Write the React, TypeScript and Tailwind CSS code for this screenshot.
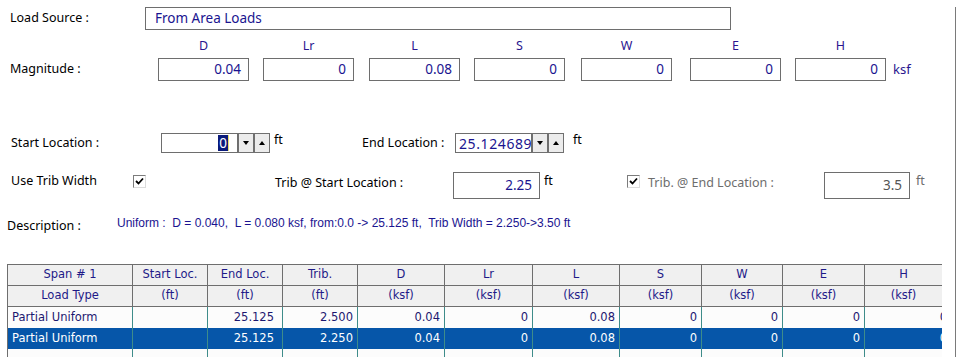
import React from 'react';

const magnitudes = [
   { key: 'D', value: '0.04', gap: 'ml-0' },
   { key: 'Lr', value: '0', gap: 'ml-[14px]' },
   { key: 'L', value: '0.08', gap: 'ml-[15px]' },
   { key: 'S', value: '0', gap: 'ml-[14px]' },
   { key: 'W', value: '0', gap: 'ml-[16px]' },
   { key: 'E', value: '0', gap: 'ml-[18px]' },
   { key: 'H', value: '0', gap: 'ml-[14px]' },
];

const headTop = ['Span # 1', 'Start Loc.', 'End Loc.', 'Trib.', 'D', 'Lr', 'L', 'S', 'W', 'E', 'H'];
const headBottom = ['Load Type', '(ft)', '(ft)', '(ft)', '(ksf)', '(ksf)', '(ksf)', '(ksf)', '(ksf)', '(ksf)', '(ksf)'];

const rows = [
   { cells: ['Partial Uniform', '', '25.125', '2.500', '0.04', '0', '0.08', '0', '0', '0', '0'], selected: false },
   { cells: ['Partial Uniform', '', '25.125', '2.250', '0.04', '0', '0.08', '0', '0', '0', '0'], selected: true },
   { cells: ['', '', '', '', '', '', '', '', '', '', ''], selected: false },
];

const CheckBox = () => (
   <div className="w-[13px] h-[13px] border-t border-l border-[#7c7c7c] border-r border-b border-r-[#dcdcdc] border-b-[#dcdcdc] bg-white flex items-center justify-center">
      <svg width="9" height="9" viewBox="0 0 9 9">
         <path d="M1 4 L3.5 6.5 L8 1.5" stroke="#000" strokeWidth="1.8" fill="none" />
      </svg>
   </div>
);

const SpinButton = ({ up }: { up?: boolean }) => (
   <div className="w-[16px] h-[20px] border border-[#707070] bg-[#ececec] flex items-center justify-center">
      <svg width="6" height="4" viewBox="0 0 6 4">
         {up ? <path d="M0 4 L3 0 L6 4 Z" fill="#000" /> : <path d="M0 0 L6 0 L3 4 Z" fill="#000" />}
      </svg>
   </div>
);

export default function App() {
   return (
      <div className="w-[962px] h-[357px] bg-white overflow-hidden font-['Noto_Sans',sans-serif] text-[12.5px] text-black">
         <div className="w-[956px] h-full border-r border-[#7a7a7a]">
            {/* Load source */}
            <div className="flex items-center h-[23px] mt-[7px]">
               <div className="w-[145px] pl-[10px]">Load Source :</div>
               <div className="w-[586px] h-[23px] border border-[#6e6e6e] pl-[9px] flex items-center text-[13.5px] text-[#1a1490]">From Area Loads</div>
            </div>

            {/* Magnitude headers */}
            <div className="flex items-center h-[20px] mt-[6px]">
               <div className="w-[158px]" />
               {magnitudes.map(m => (
                  <div key={m.key} className={`w-[91px] text-center text-[#2a168f] ${m.gap}`}>{m.key}</div>
               ))}
            </div>

            {/* Magnitude inputs */}
            <div className="flex items-center h-[23px] mt-[2px]">
               <div className="w-[158px] pl-[10px]">Magnitude :</div>
               {magnitudes.map(m => (
                  <div key={m.key} className={`w-[91px] h-[23px] border border-[#6e6e6e] flex items-center justify-end pr-[7px] text-[13.5px] text-[#1a1490] ${m.gap}`}>{m.value}</div>
               ))}
               <div className="ml-[7px] text-[#2a168f] text-[13px]">ksf</div>
            </div>

            {/* Locations */}
            <div className="flex items-start h-[20px] mt-[52px]">
               <div className="w-[362px] flex items-start">
                  <div className="w-[161px] pl-[11px] h-[20px] flex items-center">Start Location :</div>
                  <div className="w-[77px] h-[20px] border border-[#6e6e6e] flex items-center justify-end pr-[8px] text-[13.5px]">
                     <span className="bg-[#0a1a7a] text-white leading-[16px] px-px">0</span>
                     <span className="w-px h-[16px] bg-[#e8e070]" />
                  </div>
                  <SpinButton />
                  <SpinButton up />
                  <div className="ml-[4px] -mt-[2px]">ft</div>
               </div>
               <div className="w-[93px] h-[20px] flex items-center">End Location :</div>
               <div className="w-[77px] h-[20px] border border-[#6e6e6e] flex items-center pl-[3px] text-[14px] tracking-[0.6px] text-[#1a1490] overflow-hidden whitespace-nowrap">25.124689</div>
               <SpinButton />
               <SpinButton up />
               <div className="ml-[9px] -mt-[2px]">ft</div>
            </div>

            {/* Trib width */}
            <div className="flex items-start h-[27px] mt-[19px]">
               <div className="w-[133px] pl-[11px] leading-[16px] mt-px">Use Trib Width</div>
               <div className="mt-[3px]"><CheckBox /></div>
               <div className="ml-[129px] w-[178px] leading-[16px] mt-[3px]">Trib @ Start Location :</div>
               <div className="w-[87px] h-[27px] border border-[#6e6e6e] flex items-center justify-end pr-[7px] text-[13.5px] text-[#1a1490]">2.25</div>
               <div className="w-[87px] pl-[4px] leading-[16px] mt-px">ft</div>
               <div className="mt-[3px]"><CheckBox /></div>
               <div className="ml-[8px] w-[176px] leading-[16px] mt-[3px] text-[#6d6d6d]">Trib. @ End Location :</div>
               <div className="w-[86px] h-[27px] border border-[#6e6e6e] flex items-center justify-end pr-[7px] text-[13.5px] text-[#555]">3.5</div>
               <div className="pl-[6px] leading-[16px] mt-px text-[#6d6d6d]">ft</div>
            </div>

            {/* Description */}
            <div className="flex items-start h-[18px] mt-[17px]">
               <div className="w-[117px] pl-[7px] mt-[2px] leading-[16px]">Description :</div>
               <div className="font-['Liberation_Sans',sans-serif] text-[12px] leading-[14px] text-[#1a1490] whitespace-pre">
                  {'Uniform :  D = 0.040,  L = 0.080 ksf, from:0.0 -> 25.125 ft,  Trib Width = 2.250->3.50 ft'}
               </div>
            </div>

            {/* Load table */}
            <div className="ml-[7px] mt-[30px] w-[935px] overflow-hidden border-l border-t border-[#6e6e6e] font-['DejaVu_Sans',sans-serif] text-[11.5px]">
               <div className="grid grid-cols-[125px_75px_75px_75px_87px_88px_87px_82px_81px_82px_78px]">
                  {headTop.map(h => (
                     <div key={`t-${h}`} className="h-[21px] border-r border-b border-[#6e6e6e] bg-[#f0f0f0] flex items-center justify-center text-[#1e1a88]">{h}</div>
                  ))}
                  {headBottom.map((h, i) => (
                     <div key={`b-${i}`} className="h-[21px] border-r border-b border-[#6e6e6e] bg-[#f0f0f0] flex items-center justify-center text-[#1e1a88]">{h}</div>
                  ))}
                  {rows.map((r, ri) =>
                     r.cells.map((c, ci) => (
                        <div
                           key={`${ri}-${ci}`}
                           className={`h-[21px] flex items-center whitespace-nowrap ${ci === 10 ? '' : 'border-r border-[#3e8c8a]'} ${ci === 0 ? 'justify-start pl-[4px]' : ci === 10 ? 'justify-end -mr-[4px]' : ci === 2 ? 'justify-end pr-[8px]' : 'justify-end pr-[4px]'} ${r.selected ? 'bg-[#0656a9] text-white' : 'bg-[#fcfcfc] text-[#1c1870]'}`}
                        >
                           {c}
                        </div>
                     ))
                  )}
               </div>
            </div>
         </div>
      </div>
   );
}
